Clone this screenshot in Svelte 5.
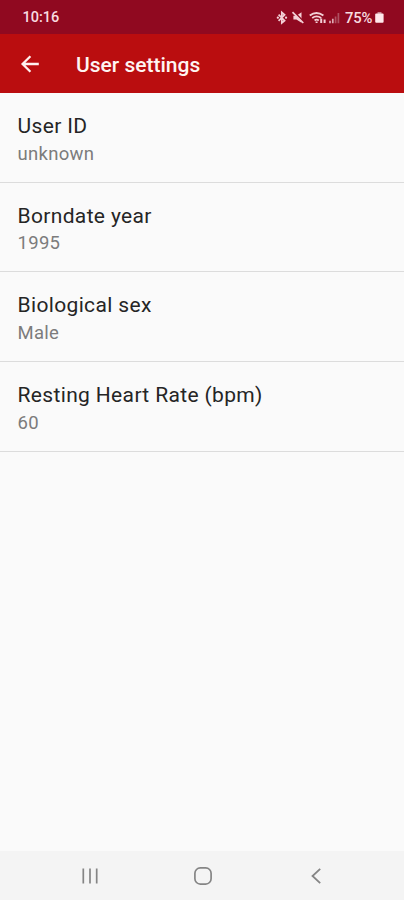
<script>
  const settings = [
    { title: 'User ID', value: 'unknown' },
    { title: 'Borndate year', value: '1995' },
    { title: 'Biological sex', value: 'Male' },
    { title: 'Resting Heart Rate (bpm)', value: '60' },
  ];
</script>

<div class="screen">
  <div class="status">
    <span class="time">10:16</span>
    <svg class="indicators" width="66" height="16" viewBox="0 0 66 16" fill="none" stroke="#f3d0d6" stroke-width="1.7">
      <path d="M2.6 4.6l6 6L5.8 13V2.4l2.8 2.4-6 6" />
      <path d="M1.8 7.7h.1M10 7.7h.1" stroke-width="2.2" stroke-linecap="round" />
      <path d="M17.4 5.8h3L25.5 2.2v10.5l-5.1-3.2h-3z" fill="#f3d0d6" stroke="none" />
      <path d="M17.6 1.6l11 11" stroke="#900920" stroke-width="1.8" />
      <path d="M16.5 2.2l10.8 10.8" />
      <path d="M33.8 5.6q6.6-5.4 13.6 0M36.2 8.1q4.3-3.4 9 0M38.6 10.4q2-1.6 4.2 0" stroke-width="1.9" />
      <path d="M40.6 11.6v1.4M45.2 8.6v4.4M48.6 13V9.6" stroke-width="2" />
      <path d="M54 13.2v-2.4M56.8 13.2V8.8" stroke="#e0a9b3" stroke-width="1.7" />
      <path d="M59.6 13.2V6.5M62.4 13.2V3" stroke="#ae5060" stroke-width="1.7" />
    </svg>
    <span class="percent">75%</span>
    <svg class="battery" width="9" height="11" viewBox="0 0 9 11">
      <path d="M2.5 0h4v2h-4z" fill="#c98490" />
      <rect x=".2" y="1.6" width="8.4" height="9.2" rx="1" fill="#ffe9ec" />
    </svg>
  </div>

  <header>
    <svg width="20" height="20" viewBox="0 0 20 20" fill="none" stroke="#fff0ee" stroke-width="2.3">
      <path d="M18.8 10H2.8M10.4 2.2L2.6 10l7.8 7.8" />
    </svg>
    <h1>User settings</h1>
  </header>

  <main>
    {#each settings as item}
      <section>
        <div class="title">{item.title}</div>
        <div class="value">{item.value}</div>
      </section>
    {/each}
  </main>

  <nav>
    <svg width="18" height="18" viewBox="0 0 18 18" stroke="#858585" stroke-width="1.7">
      <path d="M2.3 1.5v15M9 1.5v15M15.7 1.5v15" />
    </svg>
    <svg class="home" width="20" height="20" viewBox="0 0 20 20" fill="none" stroke="#858585" stroke-width="1.7">
      <rect x="1.9" y="1.9" width="16.2" height="16.2" rx="5.4" />
    </svg>
    <svg width="12" height="18" viewBox="0 0 12 18" fill="none" stroke="#858585" stroke-width="1.8">
      <path d="M10.2 1.8L2.5 9l7.7 7.2" />
    </svg>
  </nav>
</div>

<style>
  .screen {
    width: 100%;
    height: 900px;
    display: flex;
    flex-direction: column;
    background: #fafafa;
    font-family: Roboto, 'Liberation Sans', sans-serif;
    overflow: hidden;
  }
  .status {
    height: 34px;
    flex: none;
    display: flex;
    align-items: center;
    box-sizing: border-box;
    padding: 1px 20px 0 22.5px;
    background: #900920;
    color: #f9dce0;
  }
  .time {
    font-size: 14.5px;
    font-weight: 500;
    flex: 1;
  }
  .percent {
    width: 29px;
    margin-left: 3px;
    font-size: 14.8px;
    font-weight: 500;
    letter-spacing: -0.2px;
    white-space: nowrap;
  }
  .battery {
    margin-left: 1px;
  }
  header {
    height: 59px;
    flex: none;
    display: flex;
    align-items: center;
    box-sizing: border-box;
    padding: 1px 0 0 20px;
    background: #ba0d0f;
    color: #fff4f2;
  }
  h1 {
    margin: 2px 0 0 36px;
    font-size: 21px;
    line-height: 26px;
    font-weight: 500;
    white-space: nowrap;
  }
  main {
    flex: 1;
  }
  section {
    height: 89.7px;
    box-sizing: border-box;
    padding: 20px 0 0 17.5px;
    border-bottom: 1px solid #dcdcdc;
  }
  .title {
    font-size: 21px;
    line-height: 27px;
    letter-spacing: 0.35px;
    color: #252525;
  }
  .value {
    margin-top: 0.5px;
    font-size: 18.5px;
    line-height: 27px;
    letter-spacing: 0.3px;
    color: #7c7c7c;
  }
  nav {
    height: 49px;
    flex: none;
    display: flex;
    align-items: center;
    justify-content: space-between;
    box-sizing: border-box;
    padding: 1px 82px 0 81px;
    background: #f4f4f4;
  }
  .home {
    margin-right: 4px;
  }
</style>
